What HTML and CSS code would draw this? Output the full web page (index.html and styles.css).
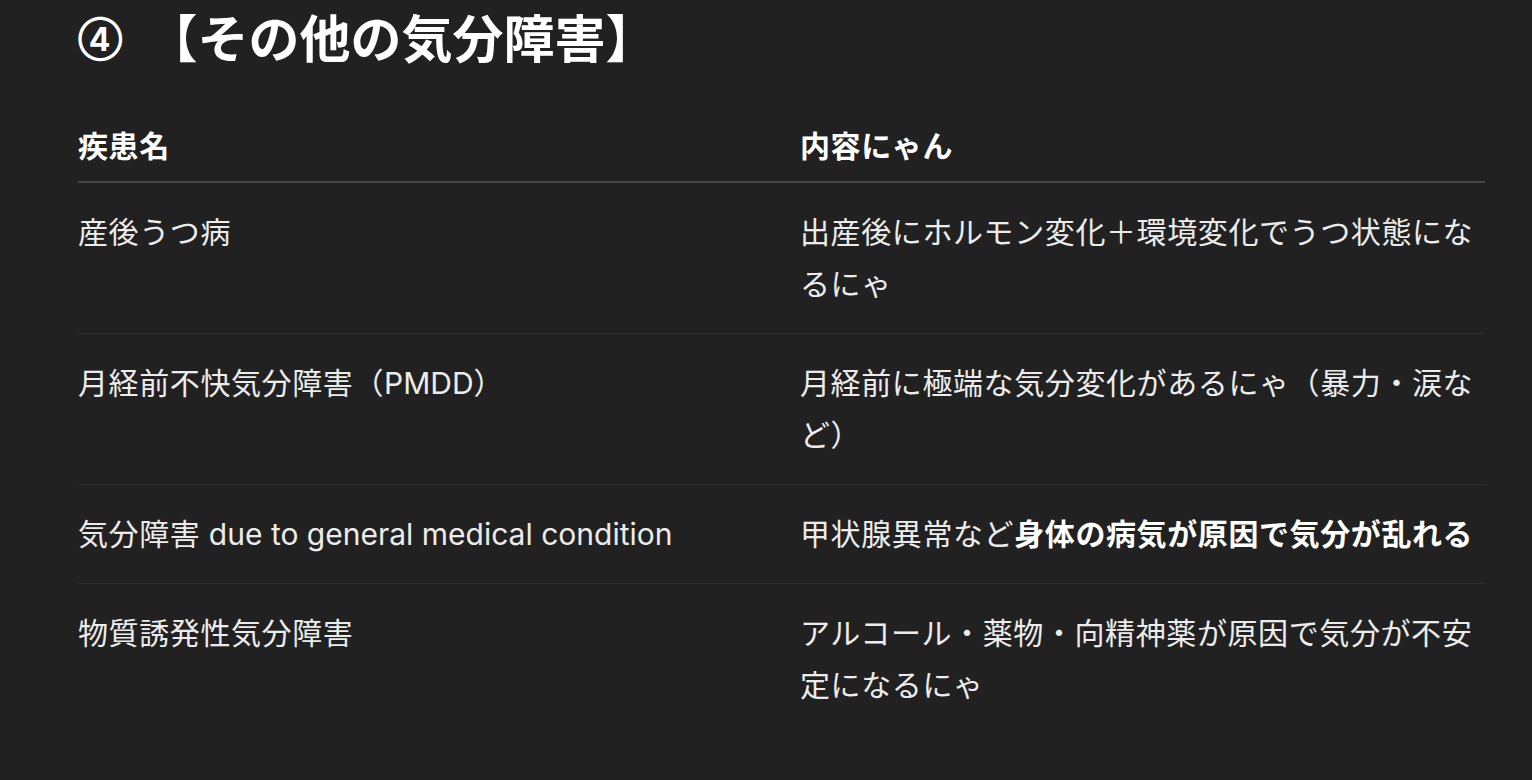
FILE: index.html
```html
<!DOCTYPE html>
<html lang="ja">
<head>
<meta charset="utf-8">
<title>その他の気分障害</title>
<link rel="stylesheet" href="styles.css">
</head>
<body>
<main class="page">
  <h3 class="title"><span class="num">④</span><span>【その他の気分障害】</span></h3>
  <table class="tbl">
    <thead>
      <tr><th class="c1">疾患名</th><th class="c2">内容にゃん</th></tr>
    </thead>
    <tbody>
      <tr><td class="c1">産後うつ病</td><td class="c2">出産後にホルモン変化＋環境変化でうつ状態になるにゃ</td></tr>
      <tr><td class="c1">月経前不快気分障害（<span class="en">PMDD</span>）</td><td class="c2">月経前に極端な気分変化があるにゃ（暴力・涙など）</td></tr>
      <tr><td class="c1">気分障害<span class="en"> due to general medical condition</span></td><td class="c2">甲状腺異常など<strong>身体の病気が原因で気分が乱れる</strong></td></tr>
      <tr><td class="c1">物質誘発性気分障害</td><td class="c2">アルコール・薬物・向精神薬が原因で気分が不安定になるにゃ</td></tr>
    </tbody>
  </table>
</main>
</body>
</html>
```

FILE: styles.css
```css
html, body {
  margin: 0;
  padding: 0;
  background: #212121;
}
body {
  color: #ececec;
  font-family: Inter, "Noto Sans CJK JP", sans-serif;
  width: 1532px;
  height: 780px;
  overflow: hidden;
}
.page {
  padding: 10px 47px 0 78px;
}
.title {
  margin: 0;
  display: flex;
  align-items: center;
  height: 60px;
  font-size: 51px;
  line-height: 60px;
  font-weight: 700;
  color: #ffffff;
}
.num {
  font-size: 32px;
  line-height: 60px;
  margin-right: 24px;
}
.tbl {
  margin-top: 50px;
  width: 1407px;
  border-collapse: collapse;
  font-size: 30px;
  line-height: 52px;
  letter-spacing: 0.6px;
}
.tbl th {
  text-align: left;
  font-weight: 700;
  color: #ffffff;
  padding: 0 0 9px 0;
  border-bottom: 2px solid #464646;
}
.tbl td {
  vertical-align: top;
  padding: 23px 0;
  border-bottom: 1px solid #2f2f2f;
}
.tbl tbody tr:last-child td {
  border-bottom: none;
}
.c1 {
  width: 722px;
}
.c2 {
  padding-right: 8px;
}
.en {
  letter-spacing: 0;
}
.tbl strong {
  font-weight: 700;
  color: #ffffff;
}
```
